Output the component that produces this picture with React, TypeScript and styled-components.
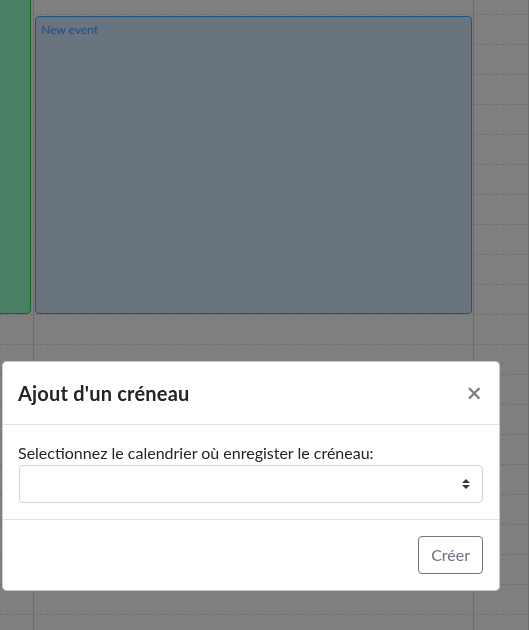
import styled, { createGlobalStyle } from "styled-components";

const GlobalStyle = createGlobalStyle`
  html, body {
    margin: 0;
    padding: 0;
    overflow: hidden;
  }
  body {
    font-family: "Lato", "Open Sans", sans-serif;
    color: #212529;
    background: #fff;
  }
`;

const SLOT_HEIGHT = 30;
const FIRST_SLOT = 14;
const slots = Array.from({ length: 21 }, (_, i) => i);

const Calendar = styled.div`
  position: relative;
  height: 630px;
  overflow: hidden;
  background: #fff;
`;

const SlotList = styled.div`
  padding-top: ${FIRST_SLOT}px;
`;

const Slot = styled.div`
  height: ${SLOT_HEIGHT}px;
  box-sizing: border-box;
  border-top: 1px dashed #dedede;
`;

const Columns = styled.div`
  position: absolute;
  inset: 0;
  display: grid;
  grid-template-columns: 34px 440px 1fr;
`;

const Column = styled.div`
  position: relative;
  border-right: 1px solid #d8d8d8;
`;

const Event = styled.div<{ $tone: "green" | "blue" }>`
  position: absolute;
  box-sizing: border-box;
  border-radius: 4px;
  padding: 6px 5px;
  font-size: 12px;
  line-height: 14px;
  border: 1px solid ${(p) => (p.$tone === "green" ? "#16d440" : "#3ea6ff")};
  background: ${(p) => (p.$tone === "green" ? "#96ffc6" : "#d4e8ff")};
  color: ${(p) => (p.$tone === "green" ? "#16a040" : "#4a9cff")};
`;

const Backdrop = styled.div`
  position: fixed;
  inset: 0;
  background: rgba(0, 0, 0, 0.5);
`;

const ModalLayer = styled.div`
  position: fixed;
  inset: 0;
  padding: 361px 0 0 2px;
`;

const Dialog = styled.div`
  width: 498px;
  box-sizing: border-box;
  background: #fff;
  border: 1px solid rgba(0, 0, 0, 0.2);
  border-radius: 4.8px;
  display: flex;
  flex-direction: column;
`;

const Header = styled.div`
  display: flex;
  align-items: flex-start;
  justify-content: space-between;
  padding: 16px 16px 16px 15px;
  border-bottom: 1px solid #dee2e6;
`;

const Title = styled.h5`
  margin: 0;
  font-size: 20px;
  font-weight: 700;
  line-height: 1.5;
  letter-spacing: 0.2px;
  color: #212529;
`;

const Close = styled.button`
  padding: 17px 17px 10px 16px;
  margin: -16px -16px -16px auto;
  background: transparent;
  border: 0;
  font-family: "Noto Sans", sans-serif;
  font-size: 27px;
  font-weight: 500;
  line-height: 1;
  color: #000;
  opacity: 0.5;
`;

const Body = styled.div`
  padding: 16px;
`;

const Label = styled.label`
  display: block;
  margin-left: -1px;
  font-size: 16px;
  line-height: 24px;
`;

const SelectWrap = styled.div`
  position: relative;
`;

const Select = styled.select`
  display: block;
  width: 100%;
  height: 38px;
  box-sizing: border-box;
  padding: 6px 28px 6px 12px;
  font-family: inherit;
  font-size: 16px;
  color: #495057;
  background: #fff;
  border: 1px solid #ced4da;
  border-radius: 4px;
  appearance: none;
`;

const Arrows = styled.svg`
  position: absolute;
  right: 13px;
  top: 14px;
  width: 8px;
  height: 10px;
  pointer-events: none;
`;

const Footer = styled.div`
  display: flex;
  justify-content: flex-end;
  align-items: center;
  padding: 12px;
  border-top: 1px solid #dee2e6;
`;

const OutlineButton = styled.button`
  margin: 4px;
  padding: 6px 12px;
  font-family: inherit;
  font-size: 16px;
  line-height: 24px;
  color: #6c757d;
  background: transparent;
  border: 1px solid #6c757d;
  border-radius: 4px;
`;

export default function App() {
  return (
    <>
      <GlobalStyle />
      <Calendar>
        <SlotList>
          {slots.map((i) => (
            <Slot key={i} />
          ))}
        </SlotList>
        <Columns>
          <Column>
            <Event $tone="green" style={{ left: -10, right: 2, top: -10, height: 324 }} />
          </Column>
          <Column>
            <Event
              $tone="blue"
              style={{ left: 1, right: 1, top: FIRST_SLOT + 2, height: SLOT_HEIGHT * 10 - 2 }}
            >
              New event
            </Event>
          </Column>
          <Column />
        </Columns>
      </Calendar>
      <Backdrop />
      <ModalLayer>
        <Dialog>
          <Header>
            <Title>Ajout d'un créneau</Title>
            <Close aria-label="Close">×</Close>
          </Header>
          <Body>
            <Label htmlFor="calendar">Selectionnez le calendrier où enregister le créneau:</Label>
            <SelectWrap>
              <Select id="calendar" defaultValue="">
                <option value=""></option>
              </Select>
              <Arrows viewBox="0 0 4 5">
                <path fill="#343a40" d="M2 0L0 2h4zm0 5L0 3h4z" />
              </Arrows>
            </SelectWrap>
          </Body>
          <Footer>
            <OutlineButton>Créer</OutlineButton>
          </Footer>
        </Dialog>
      </ModalLayer>
    </>
  );
}
